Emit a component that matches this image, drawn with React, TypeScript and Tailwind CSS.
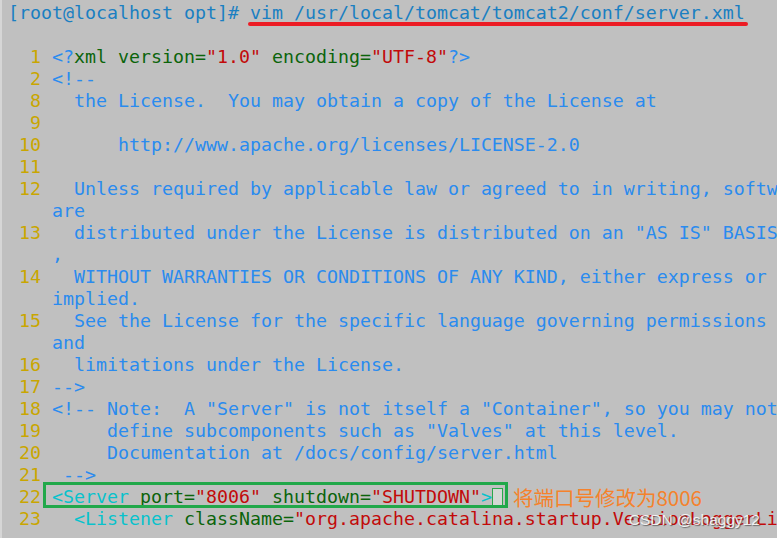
type Seg = [string, string]
type Row = { n?: string; segs: Seg[] }

const blue = 'text-[#2a8bef]'
const green = 'text-[#0b640b]'
const red = 'text-[#c20a0a]'
const cyan = 'text-[#08c2cc]'

const rows: Row[] = [
  { segs: [] },
  {
    n: '1',
    segs: [
      ['<?', blue],
      ['xml version=', green],
      ['"1.0"', red],
      [' encoding=', green],
      ['"UTF-8"', red],
      ['?>', blue],
    ],
  },
  { n: '2', segs: [['<!--', blue]] },
  { n: '8', segs: [['  the License.  You may obtain a copy of the License at', blue]] },
  { n: '9', segs: [] },
  { n: '10', segs: [['      http://www.apache.org/licenses/LICENSE-2.0', blue]] },
  { n: '11', segs: [] },
  { n: '12', segs: [['  Unless required by applicable law or agreed to in writing, software', blue]] },
  { segs: [['are', blue]] },
  { n: '13', segs: [['  distributed under the License is distributed on an "AS IS" BASIS', blue]] },
  { segs: [[',', blue]] },
  { n: '14', segs: [['  WITHOUT WARRANTIES OR CONDITIONS OF ANY KIND, either express or', blue]] },
  { segs: [['implied.', blue]] },
  { n: '15', segs: [['  See the License for the specific language governing permissions', blue]] },
  { segs: [['and', blue]] },
  { n: '16', segs: [['  limitations under the License.', blue]] },
  { n: '17', segs: [['-->', blue]] },
  { n: '18', segs: [['<!-- Note:  A "Server" is not itself a "Container", so you may not', blue]] },
  { n: '19', segs: [['     define subcomponents such as "Valves" at this level.', blue]] },
  { n: '20', segs: [['     Documentation at /docs/config/server.html', blue]] },
  { n: '21', segs: [[' -->', blue]] },
]

function Gutter({ n }: { n?: string }) {
  return <span className="text-[#c9a600]">{(n ?? '').padStart(3) + ' '}</span>
}

export default function App() {
  return (
    <div className="relative h-[538px] w-[777px] overflow-hidden border-l-2 border-[#d6d6d6] bg-[#c0c0c0] pl-[6px] pt-[2px] font-['DejaVu_Sans_Mono',monospace] text-[18.27px] leading-[22px]">
      <div className="h-[22px] whitespace-pre text-[#1a7fc2]">
        {'[root@localhost opt]# '}
        <span className="relative">
          vim /usr/local/tomcat/tomcat2/conf/server.xml
          <span className="absolute -left-[2px] -right-[3px] top-[20px] h-[4px] rounded-full bg-[#ec1c24]" />
        </span>
      </div>

      {rows.map((r, i) => (
        <div key={i} className="h-[22px] whitespace-pre">
          <Gutter n={r.n} />
          {r.segs.map(([t, c], j) => (
            <span key={j} className={c}>
              {t}
            </span>
          ))}
        </div>
      ))}

      <div className="relative flex h-[22px] items-center whitespace-pre">
        <Gutter n="22" />
        <span className={cyan}>{'<Server'}</span>
        <span className={green}> port=</span>
        <span className={red}>"8006"</span>
        <span className={green}> shutdown=</span>
        <span className={red}>"SHUTDOWN"</span>
        <span className={cyan}>{'>'}</span>
        <span className="h-[18px] w-[11px] border border-[#2aa84a] bg-[#d4d8d4]" />
        <span className="ml-[10px] font-['Noto_Sans_CJK_SC',sans-serif] text-[20.5px] leading-[22px] text-[#f5822c]">
          将端口号修改为8006
        </span>
        <span className="absolute -top-[4px] left-[35px] h-[26px] w-[465px] border-[3px] border-[#21a84a]" />
      </div>

      <div className="h-[22px] whitespace-pre">
        <Gutter n="23" />
        <span className={cyan}>{'  <Listener'}</span>
        <span className={green}> className=</span>
        <span className={red}>"org.apache.catalina.startup.VersionLoggerListener" /&gt;</span>
      </div>

      <div className="absolute bottom-[8px] right-[17px] font-['Liberation_Sans',sans-serif] text-[15.5px] leading-[20px] text-white/85 [text-shadow:1px_1px_1px_rgba(70,70,70,0.7)]">
        CSDN @shaggy12
      </div>
    </div>
  )
}
